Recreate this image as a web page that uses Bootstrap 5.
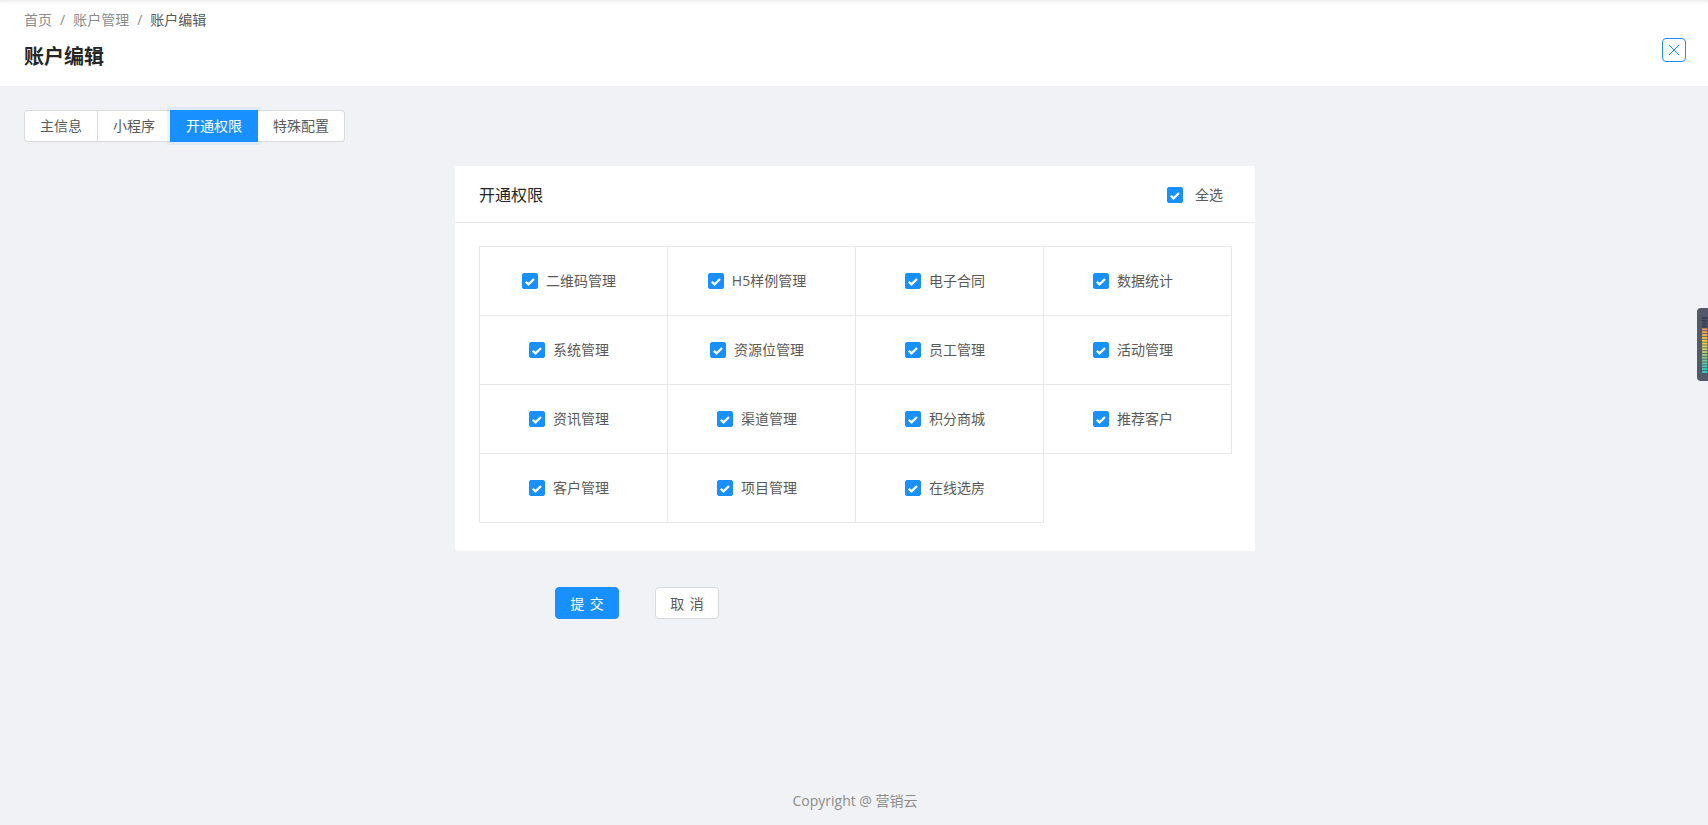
<!DOCTYPE html>
<html lang="zh-CN">

<head>
    <meta charset="UTF-8">
    <meta name="viewport" content="width=device-width, initial-scale=1.0">
    <title>账户编辑</title>
    <link href="https://cdn.jsdelivr.net/npm/bootstrap@5.3.0/dist/css/bootstrap.min.css" rel="stylesheet">
    <style>
        html,
        body {
            height: 100%;
        }

        body {
            background-color: #f0f2f5;
            font-family: "Open Sans", "Noto Sans CJK SC", sans-serif;
            font-size: 14px;
            color: #595959;
            overflow: hidden;
        }

        .page-wrap {
            height: 825px;
        }

        .top-head {
            height: 86px;
            padding: 10px 24px 0;
            background: #fff;
            box-shadow: inset 0 6px 5px -5px rgba(0, 0, 0, .1);
        }

        .crumbs {
            line-height: 20px;
            color: #8c8c8c;
        }

        .crumbs .sep {
            margin: 0 8px;
            color: #8c8c8c;
        }

        .crumbs .now {
            color: #595959;
        }

        .head-title {
            margin: 13px 0 0;
            font-size: 20px;
            line-height: 28px;
            font-weight: 700;
            color: #262626;
        }

        .close-box {
            top: 38px;
            right: 22px;
            width: 24px;
            height: 24px;
            border: 1px solid #1890ff;
            border-radius: 4px;
            background: #fff;
        }

        .tab-bar {
            margin: 24px 0 0 24px;
            height: 32px;
        }

        .tab-btn {
            height: 32px;
            padding: 0 15px;
            line-height: 30px;
            border: 1px solid #d9d9d9;
            border-left-width: 0;
            background: #fff;
            color: #595959;
        }

        .tab-btn:first-child {
            border-left-width: 1px;
            border-radius: 4px 0 0 4px;
        }

        .tab-btn:last-child {
            border-radius: 0 4px 4px 0;
        }

        .tab-btn.on {
            margin-left: -1px;
            border-left-width: 1px;
            background: #1890ff;
            border-color: #1890ff;
            color: #fff;
            box-shadow: 0 0 0 3px rgba(24, 144, 255, .08);
        }

        .perm-card {
            width: 800px;
            margin: 24px 0 0 455px;
            background: #fff;
            border-radius: 2px;
        }

        .perm-head {
            height: 57px;
            padding: 1px 32px 0 24px;
            border-bottom: 1px solid #e8e8e8;
        }

        .perm-title {
            padding-top: 1px;
            font-size: 16px;
            color: #262626;
        }

        .perm-body {
            padding: 23px 24px 28px;
        }

        .perm-grid {
            display: grid;
            grid-template-columns: repeat(4, 188px);
            width: 753px;
            border-top: 1px solid #e8e8e8;
            border-left: 1px solid #e8e8e8;
        }

        .perm-cell {
            height: 69px;
            padding-right: 1px;
            border-right: 1px solid #e8e8e8;
            border-bottom: 1px solid #e8e8e8;
        }

        .perm-blank {
            height: 69px;
        }

        .chk.form-check-input {
            width: 16px;
            height: 16px;
            margin: 0;
            flex: none;
            border-radius: 2px;
            background-color: #1890ff;
            border-color: #1890ff;
            background-size: 16px 16px;
            background-image: url("data:image/svg+xml,%3csvg xmlns='http://www.w3.org/2000/svg' viewBox='0 0 16 16'%3e%3cpath fill='none' stroke='%23fff' stroke-width='2.2' d='M3.8 8.7l2.7 2.7L12 6'/%3e%3c/svg%3e");
        }

        .chk-text {
            padding: 0 8px;
            line-height: 20px;
        }

        .chk-all .chk-text {
            padding: 0 0 0 12px;
        }

        .form-foot {
            width: 800px;
            margin: 36px 0 0 455px;
            padding-left: 100px;
            gap: 36px;
        }

        .act-btn {
            width: 64px;
            height: 32px;
            padding: 0;
            font-size: 14px;
            border-radius: 4px;
            word-spacing: 2px;
        }

        .act-ok,
        .act-ok:hover {
            background: #1890ff;
            border: 1px solid #1890ff;
            color: #fff;
        }

        .act-no,
        .act-no:hover {
            background: #fff;
            border: 1px solid #d9d9d9;
            color: #595959;
        }

        .foot-line {
            margin-top: auto;
            padding: 0 0 14px 2px;
            line-height: 20px;
            color: #8c8c8c;
            text-align: center;
        }

        .side-meter {
            top: 308px;
            right: 0;
        }
    </style>
</head>

<body>
    <div class="page-wrap d-flex flex-column position-relative">
        <div class="top-head">
            <div class="crumbs">首页<span class="sep">/</span>账户管理<span class="sep">/</span><span class="now">账户编辑</span></div>
            <h1 class="head-title">账户编辑</h1>
        </div>
        <div class="close-box position-absolute d-flex align-items-center justify-content-center">
            <svg width="12" height="12" viewBox="0 0 12 12" fill="none" stroke="#1890ff" stroke-width="1">
                <path d="M1 1L11 11M11 1L1 11" />
            </svg>
        </div>

        <div class="tab-bar d-flex">
            <div class="tab-btn">主信息</div>
            <div class="tab-btn">小程序</div>
            <div class="tab-btn on">开通权限</div>
            <div class="tab-btn">特殊配置</div>
        </div>

        <div class="perm-card">
            <div class="perm-head d-flex align-items-center justify-content-between">
                <div class="perm-title">开通权限</div>
                <label class="chk-all d-flex align-items-center">
                    <input class="form-check-input chk" type="checkbox" checked>
                    <span class="chk-text">全选</span>
                </label>
            </div>
            <div class="perm-body">
                <div class="perm-grid" id="permGrid"></div>
            </div>
        </div>

        <div class="form-foot d-flex">
            <button type="button" class="btn act-btn act-ok">提 交</button>
            <button type="button" class="btn act-btn act-no">取 消</button>
        </div>

        <div class="foot-line">Copyright @ 营销云</div>

        <svg class="side-meter position-absolute" width="11" height="73" viewBox="0 0 11 73">
            <path d="M11 0H4Q0 0 0 4V69Q0 73 4 73H11Z" fill="#535969" />
            <g id="meterBars"></g>
        </svg>
    </div>

    <script src="https://cdn.jsdelivr.net/npm/bootstrap@5.3.0/dist/js/bootstrap.bundle.min.js"></script>
    <script>
        // permission cells
        const perms = ['二维码管理', 'H5样例管理', '电子合同', '数据统计', '系统管理', '资源位管理', '员工管理', '活动管理',
            '资讯管理', '渠道管理', '积分商城', '推荐客户', '客户管理', '项目管理', '在线选房'];
        document.getElementById('permGrid').innerHTML = perms.map(p => `
            <label class="perm-cell d-flex align-items-center justify-content-center">
                <input class="form-check-input chk" type="checkbox" checked>
                <span class="chk-text">${p}</span>
            </label>`).join('') + '<div class="perm-blank"></div>';

        // meter bars on the right edge
        const colors = ['#3a3f4c', '#3a3f4c', '#3a3f4c', '#3a3f4c', '#e8965a', '#eca256', '#f0b052', '#f3c04e', '#f2cd4c', '#eacf50',
            '#dcd45c', '#c8d266', '#b2cf70', '#9ccc7a', '#86ca86', '#72c892', '#5ec89e', '#4cc8aa', '#3acab4', '#2ccdbc'];
        document.getElementById('meterBars').innerHTML = colors.map((c, i) =>
            `<rect x="5" y="${9 + i * 2.84}" width="5.4" height="2" fill="${c}"/>`).join('');
    </script>
</body>

</html>
